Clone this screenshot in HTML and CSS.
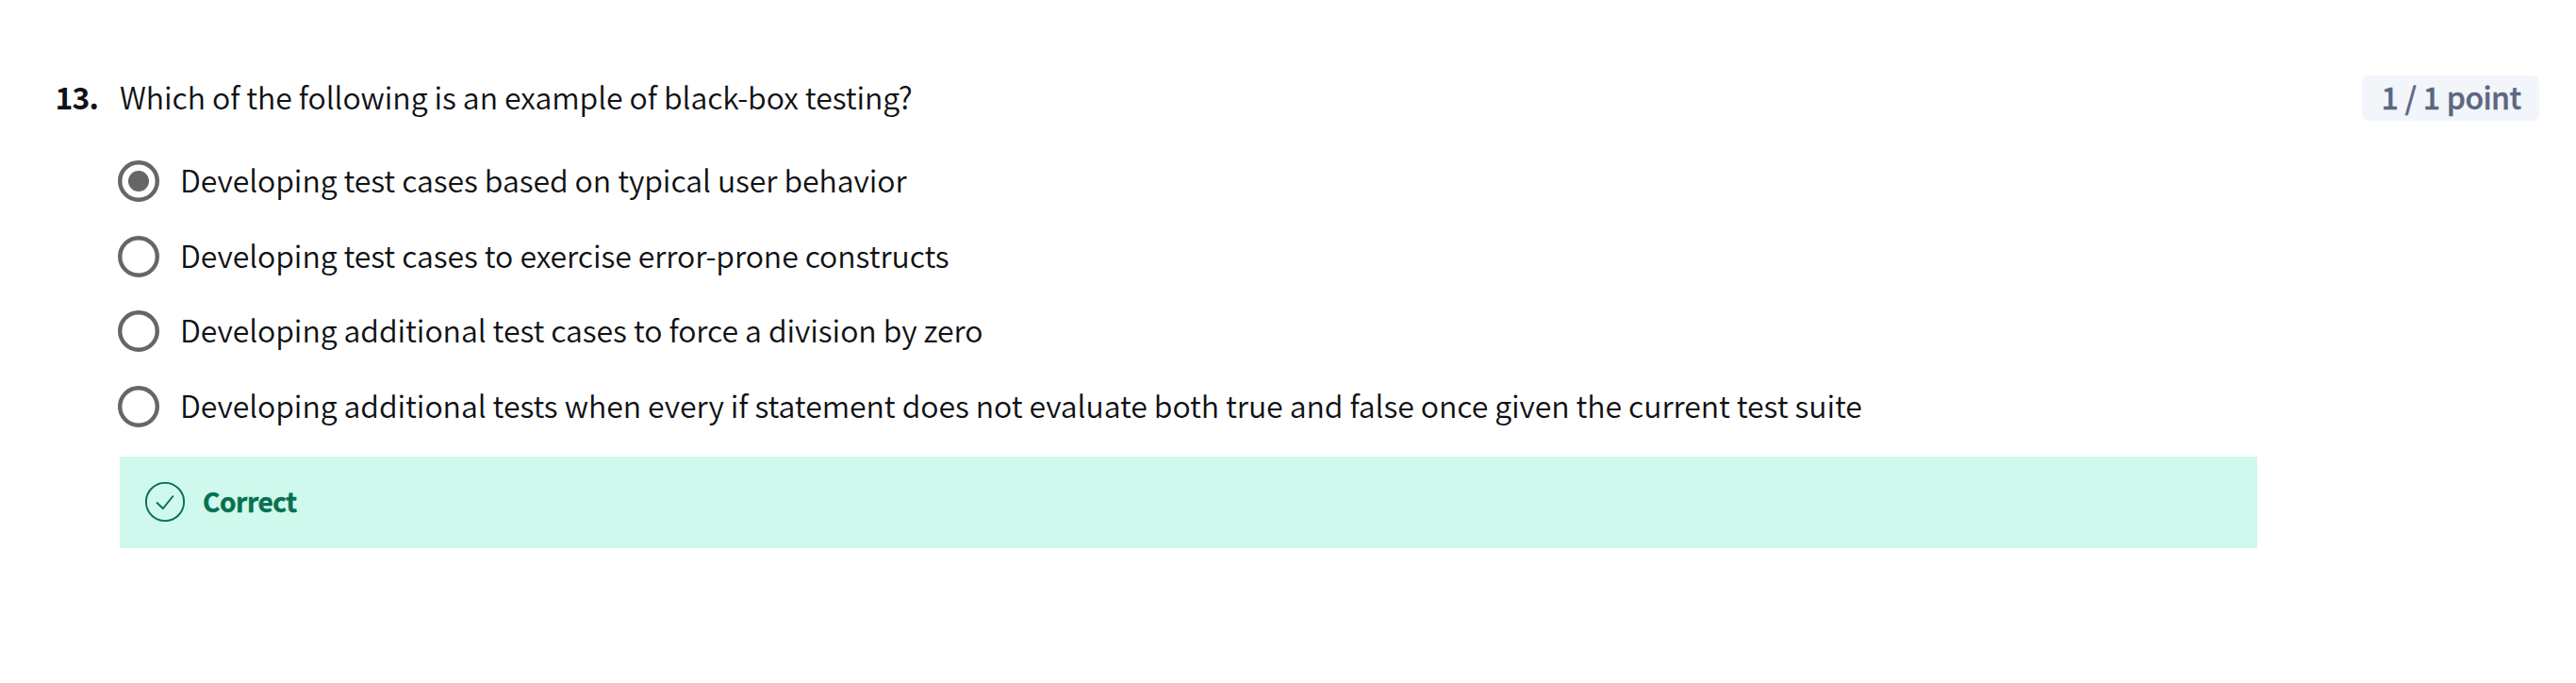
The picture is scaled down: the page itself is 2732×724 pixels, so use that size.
FILE: index.html
```html
<!DOCTYPE html>
<html lang="en">
<head>
<meta charset="utf-8">
<title>Quiz question</title>
<link rel="stylesheet" href="styles.css">
</head>
<body>
<main class="question">
  <div class="number">13.</div>
  <div class="content">
    <p class="prompt"><span>Which of the following is an example of black-box testing?</span></p>
    <ul class="options">
      <li class="option"><svg class="radio" viewBox="0 0 44 44"><circle class="ring" cx="22" cy="22" r="19.8"/><circle class="dot" cx="22" cy="22" r="11"/></svg><span class="label">Developing test cases based on typical user behavior</span></li>
      <li class="option"><svg class="radio" viewBox="0 0 44 44"><circle class="ring" cx="22" cy="22" r="19.8"/></svg><span class="label">Developing test cases to exercise error-prone constructs</span></li>
      <li class="option"><svg class="radio" viewBox="0 0 44 44"><circle class="ring" cx="22" cy="22" r="19.8"/></svg><span class="label">Developing additional test cases to force a division by zero</span></li>
      <li class="option"><svg class="radio" viewBox="0 0 44 44"><circle class="ring" cx="22" cy="22" r="19.8"/></svg><span class="label">Developing additional tests when every if statement does not evaluate both true and false once given the current test suite</span></li>
    </ul>
    <div class="feedback">
      <svg class="check" viewBox="0 0 42 42" width="42" height="42"><circle cx="21" cy="21" r="20.1"/><path d="M12 21.5 L18.8 28 L29.8 14.5"/></svg>
      <span class="verdict">Correct</span>
    </div>
  </div>
  <div class="points">1 / 1 point</div>
</main>
</body>
</html>
```
FILE: styles.css
```css
* { box-sizing: border-box; }
body {
  margin: 0;
  background: #fff;
  color: #0f1114;
  font-family: "Noto Sans CJK SC", "Noto Sans", sans-serif;
  font-size: 32px;
  font-weight: 350;
  line-height: 48px;
  letter-spacing: -0.068px;
}
.question {
  display: flex;
  align-items: flex-start;
  padding: 78px 39px 0 58px;
}
.number { flex: 0 0 69px; padding-left: 0.5px; font-weight: 700; letter-spacing: -0.9px; }
.content { flex: 0 0 2267px; }
.prompt { margin: 0 0 26.17px; }
.options {
  list-style: none;
  margin: 0 0 13.15px;
  padding: 0;
}
.option {
  display: flex;
  align-items: center;
  height: 79.67px;
  margin-left: -2px;
}
.radio {
  width: 44px;
  height: 44px;
  margin-right: 22px;
}
.ring {
  fill: none;
  stroke: #666;
  stroke-width: 4.4;
}
.dot { fill: #666; }
.label { padding-bottom: 4px; }
.feedback {
  display: flex;
  align-items: center;
  height: 97px;
  padding: 0 0 1px 27px;
  background: #d0f9ed;
  color: #087051;
}
.check {
  fill: none;
  stroke: #087051;
  stroke-width: 1.9;
}
.verdict {
  margin-left: 19px;
  padding-bottom: 1px;
  font-size: 28px;
  font-weight: 700;
  letter-spacing: -0.4px;
  -webkit-text-stroke: 0.5px #087051;
}
.points {
  margin: 2px 0 0 auto;
  width: 188px;
  height: 48px;
  padding-left: 1px;
  line-height: 44px;
  text-align: center;
  border-radius: 8px;
  background: #f2f5fa;
  color: #5b6780;
  font-weight: 500;
  letter-spacing: -0.6px;
  word-spacing: 0.8px;
  -webkit-text-stroke: 0.4px #5b6780;
}
```
